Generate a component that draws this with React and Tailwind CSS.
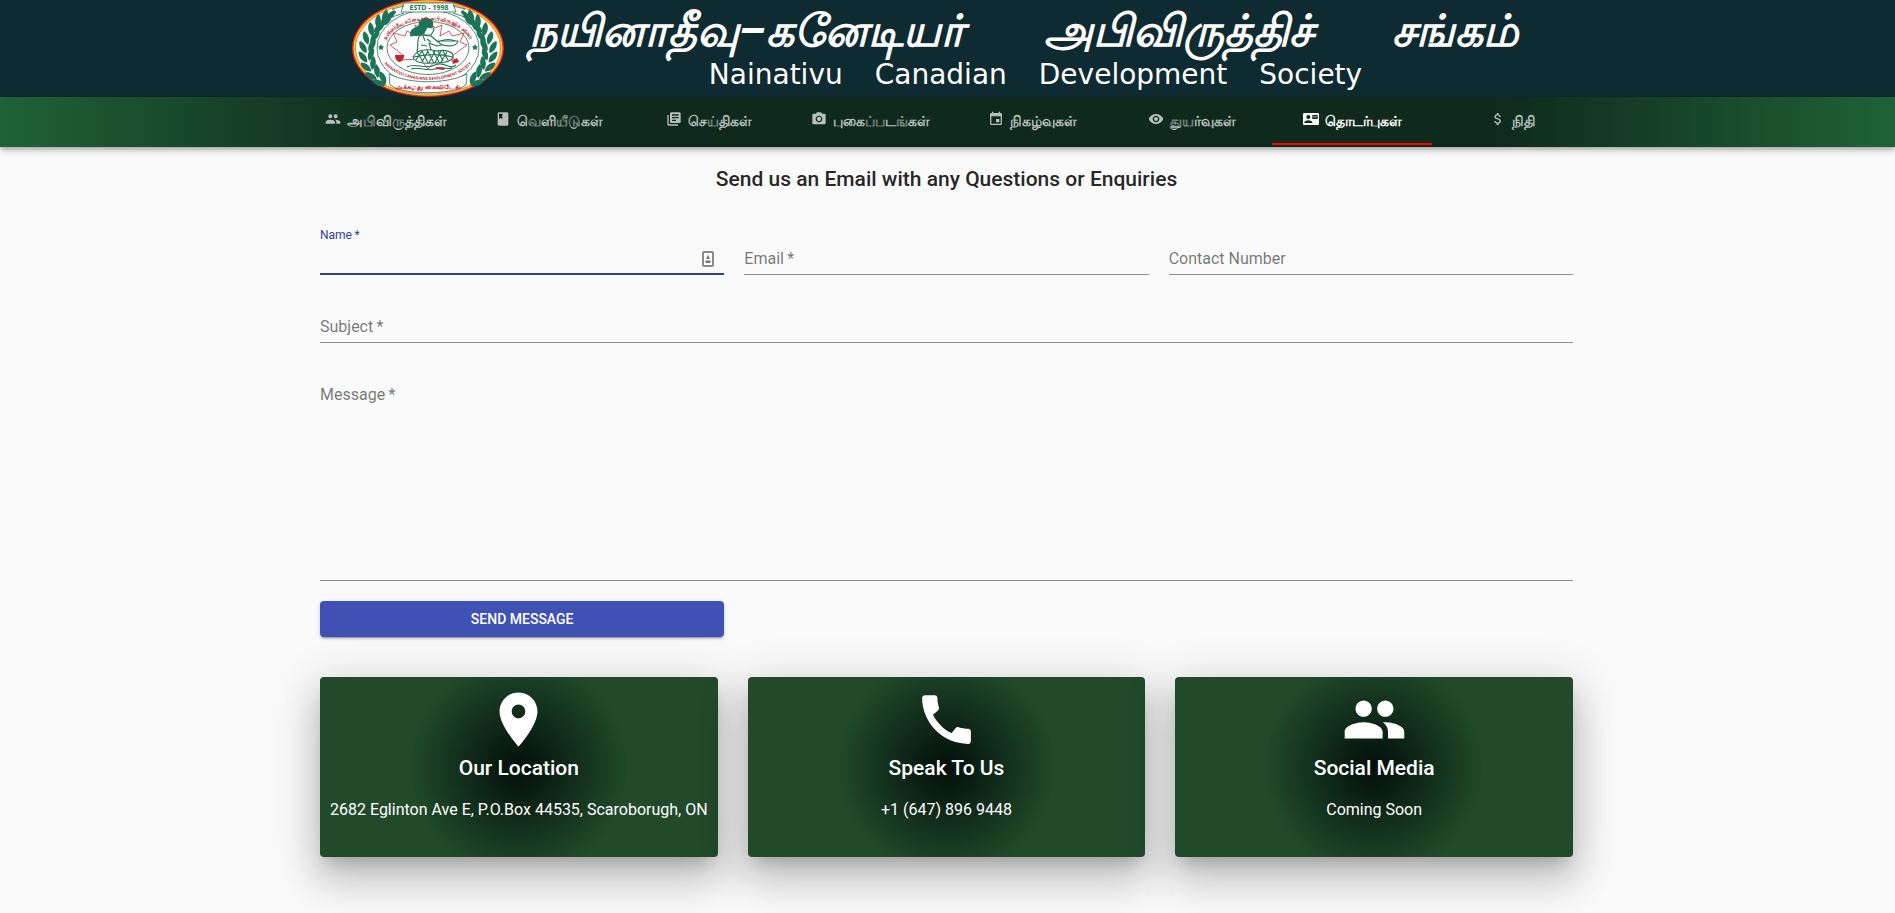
import React from "react";
import {
  MdAttachMoney,
  MdClass,
  MdContactMail,
  MdEvent,
  MdLibraryBooks,
  MdPhotoCamera,
  MdVisibility,
} from "react-icons/md";

const People = ({ className }) => (
  <svg viewBox="0 0 24 24" fill="currentColor" className={className} aria-hidden="true">
    <path d="M16 11c1.66 0 2.99-1.34 2.99-3S17.66 5 16 5c-1.66 0-3 1.34-3 3s1.34 3 3 3zm-8 0c1.66 0 2.99-1.34 2.99-3S9.66 5 8 5C6.34 5 5 6.34 5 8s1.34 3 3 3zm0 2c-2.33 0-7 1.17-7 3.5V19h14v-2.5c0-2.33-4.67-3.5-7-3.5zm8 0c-.29 0-.62.02-.97.05 1.16.84 1.97 1.97 1.97 3.45V19h6v-2.5c0-2.33-4.67-3.5-7-3.5z" />
  </svg>
);

const Pin = ({ className }) => (
  <svg viewBox="0 0 24 24" fill="currentColor" className={className} aria-hidden="true">
    <path d="M12 2C8.13 2 5 5.13 5 9c0 5.25 7 13 7 13s7-7.75 7-13c0-3.87-3.13-7-7-7zm0 9.5c-1.38 0-2.5-1.12-2.5-2.5s1.12-2.5 2.5-2.5 2.5 1.12 2.5 2.5-1.12 2.5-2.5 2.5z" />
  </svg>
);

const Phone = ({ className }) => (
  <svg viewBox="0 0 24 24" fill="currentColor" className={className} aria-hidden="true">
    <path d="M20.01 15.38c-1.23 0-2.42-.2-3.53-.56-.35-.12-.74-.03-1.01.24l-1.57 1.97c-2.83-1.35-5.48-3.9-6.89-6.83l1.95-1.66c.27-.28.35-.67.24-1.02-.37-1.11-.56-2.3-.56-3.53 0-.54-.45-.99-.99-.99H4.19C3.65 3 3 3.24 3 3.99 3 13.28 10.73 21 20.01 21c.71 0 .99-.63.99-1.18v-3.45c0-.54-.45-.99-.99-.99z" />
  </svg>
);

const tabs = [
  { label: "அபிவிருத்திகள்", Icon: People },
  { label: "வெளியீடுகள்", Icon: MdClass },
  { label: "செய்திகள்", Icon: MdLibraryBooks },
  { label: "புகைப்படங்கள்", Icon: MdPhotoCamera },
  { label: "நிகழ்வுகள்", Icon: MdEvent },
  { label: "துயர்வுகள்", Icon: MdVisibility },
  { label: "தொடர்புகள்", Icon: MdContactMail, active: true },
  { label: "நிதி", Icon: MdAttachMoney },
];

const cards = [
  { title: "Our Location", text: "2682 Eglinton Ave E, P.O.Box 44535, Scaroborugh, ON", Icon: Pin },
  { title: "Speak To Us", text: "+1 (647) 896 9448", Icon: Phone },
  { title: "Social Media", text: "Coming Soon", Icon: People },
];

// Leaves of the left laurel: x, y and rotation; the right one is its mirror.
const leaves = [
  [40, 16, 50], [34, 17, 15], [34, 23, 62], [27, 22, 5], [28, 29, 50], [20, 30, -8],
  [24, 37, 40], [15, 39, -18], [21, 46, 30], [12, 48, -30], [20, 55, 18], [12, 58, -38],
  [22, 64, 5], [15, 68, -50], [26, 72, -8], [20, 77, -60], [32, 79, -22], [28, 84, -72],
];

const Laurel = () => (
  <g fill="#1d7358">
    <path d="M42 13C22 22 6 54 34 84" fill="none" stroke="#1d7358" strokeWidth="1" />
    {leaves.map(([x, y, r], i) => (
      <path key={i} d="M0 7C-4.500 2-3-4 0-7C3-4 4.500 2 0 7Z" transform={`translate(${x} ${y}) rotate(${r})`} />
    ))}
  </g>
);

function Crest() {
  return (
    <svg viewBox="0 0 154 100" className="h-[100px] w-[154px] shrink-0" role="img" aria-label="Nainativu Canadian Development Society crest">
      <defs>
        <path id="ring-top" d="M33 50A44 29 0 0 1 121 50" />
        <path id="ring-bottom" d="M28 51A49 30 0 0 0 126 51" />
      </defs>
      <ellipse cx="77" cy="49" rx="76" ry="49" fill="#e3202b" />
      <ellipse cx="77" cy="49" rx="74.500" ry="47.700" fill="#ffd633" />
      <ellipse cx="77" cy="49" rx="73" ry="46.500" fill="#f5821f" />
      <ellipse cx="77" cy="49" rx="72" ry="45.600" fill="#fff" />
      <Laurel />
      <g transform="translate(154 0) scale(-1 1)">
        <Laurel />
      </g>
      <ellipse cx="77" cy="49" rx="51" ry="38" fill="#fff" stroke="#1d7358" strokeWidth="0.800" />
      <ellipse cx="77" cy="49" rx="41" ry="26.500" fill="#fff" stroke="#1d7358" strokeWidth="0.800" />
      <path
        d="M77 20L71 29L64 26L66 37L56 32L54 37L42 34L46 43L39 46L53 57L50 61L69 60L77 70L86 60L104 61L101 57L116 46L109 43L113 34L101 37L98 32L89 37L91 26L84 29Z"
        fill="none"
        stroke="#d6303a"
        strokeWidth="0.800"
      />
      <g stroke="#1d7358" strokeWidth="1.100" strokeLinejoin="round">
        <path d="M69 36C65 42 68 47 66 52C72 55 77 53 80 51L78 44L86 47L95 45L95 43L87 43L80 37Z" fill="#fff" />
        <path d="M72 28L81 26L83 31L80 36L73 36Z" fill="#fff" />
        <path d="M60 37C58 31 64 29 68 27C68 21 73 18 78 20C83 22 82 27 80 29L76 28L73 34C70 38 66 35 60 37Z" fill="#1d7358" />
        <path d="M62 58C66 50 77 50 86 52C95 50 103 53 102 58C100 64 88 64 80 64C72 65 63 63 62 58Z" fill="#fff" />
        <path d="M66 53L72 63M71 52L77 64M76 51L83 64M82 52L88 63M87 52L92 62M92 52L97 61M65 61L71 52M71 63L77 52M78 64L84 52M84 64L90 52M90 63L96 53M63 58C76 55 90 55 102 58" fill="none" />
        <path d="M87 42H107C106 48 91 49 87 42ZM89 42Q97 39 105 42" fill="#fff" />
        <path d="M56 68C64 63 74 71 84 66S98 72 105 66M60 70C70 67 74 73 84 70S96 71 101 69M72 37L74 42M76 40L80 43M70 46L76 47" fill="none" />
      </g>
      <g fill="#1d7358">
        <path d="M30 45l1 2.200 2.300 .2-1.700 1.500 .6 2.300-2.200-1.200-2.200 1.200 .6-2.300-1.700-1.500 2.300-.2ZM124 45l1 2.200 2.300 .2-1.700 1.500 .6 2.300-2.200-1.200-2.200 1.200 .6-2.300-1.700-1.500 2.300-.2Z" />
      </g>
      <path d="M44 56H53C53 61 50 63 48.500 63S44 61 44 56ZM101 62L106 59L108 63L102 65ZM85 68L94 69L93 71L85 70Z" fill="#c22630" />
      <path d="M53 7L41 10L45 13L41 18L53 14M102 7L114 10L110 13L114 18L102 14M53 4H102L105 13H50Z" fill="#fff" stroke="#1d7358" strokeWidth="0.800" />
      <path d="M38 75L48 79C66 84 88 84 106 79L116 75L115 86L108 90C90 95 64 95 46 90L39 86Z" fill="#fff" stroke="#1d7358" strokeWidth="0.800" />
      <g fontFamily="'Open Sans', sans-serif" fontWeight="700" fill="#c22630" textAnchor="middle">
        <text x="78" y="11" fontSize="7" fill="#1d7358">ESTD - 1998</text>
        <text fontSize="5">
          <textPath href="#ring-top" startOffset="50%">நயினாதீவு கனேடியர் அபிவிருத்திச் சங்கம்</textPath>
        </text>
        <text fontSize="4">
          <textPath href="#ring-bottom" startOffset="50%">NAINATIVU CANADIANS DEVELOPMENT SOCIETY</textPath>
        </text>
        <text x="77" y="90" fontSize="7">அக்கமது கைவிடேல்</text>
      </g>
    </svg>
  );
}

function Field({ id, label, type = "text", required, active, multiline, className = "" }) {
  const box =
    "block w-full resize-none bg-transparent px-0 text-base text-black/87 outline-none " +
    (active ? "border-b-2 border-[#303f9f] " : "border-b border-[#8f8f8f] ");
  return (
    <div className={"relative pt-4 " + className}>
      <label
        htmlFor={id}
        className={
          "pointer-events-none absolute left-0 " +
          (active ? "top-0 text-xs leading-4 text-[#303f9f]" : "top-6 text-base leading-4 text-black/54")
        }
      >
        {label}
        {required && "\u2009*"}
      </label>
      {multiline ? (
        <textarea id={id} name={id} className={box + "h-[202px] py-2"} />
      ) : (
        <input id={id} name={id} type={type} className={box + "h-8"} />
      )}
      {active && (
        <svg viewBox="0 0 12 16" className="absolute right-[10px] bottom-2 h-4 w-3" aria-hidden="true">
          <rect x="1" y="1" width="10" height="14" rx="1" fill="#fff" stroke="#8a8a8a" strokeWidth="2" />
          <path d="M6 3.500L8 8H4ZM3.500 9.500h5v2.500h-5z" fill="#777" />
        </svg>
      )}
    </div>
  );
}

export default function App() {
  return (
    <div className="min-h-screen bg-[#fafafa] pr-[2px] font-[Roboto,sans-serif] text-black/87">
      <header className="-mr-[2px]">
        <div className="flex h-[97px] items-center justify-center gap-6 overflow-hidden bg-[#0f2b32] pr-[26px]">
          <Crest />
          <div className="flex w-[990px] flex-col items-center pb-1 text-white">
            <h1 className="flex w-full justify-between text-[44px] leading-[56px] font-bold whitespace-nowrap italic">
              <span>நயினாதீவு–கனேடியர்</span> <span>அபிவிருத்திச்</span> <span>சங்கம்</span>
            </h1>
            <p className="flex gap-8 pl-6 font-['DejaVu_Sans',sans-serif] text-[28px] leading-8 whitespace-nowrap">
              <span>Nainativu</span> <span>Canadian</span> <span>Development</span> <span>Society</span>
            </p>
          </div>
        </div>
        <nav className="relative flex h-[50px] justify-center bg-[linear-gradient(90deg,#1f6237,#0f2a1d_21%,#0f2a1d_79%,#1f6237)] shadow-[0_2px_4px_-1px_rgba(0,0,0,0.2),0_4px_5px_0_rgba(0,0,0,0.14),0_1px_10px_0_rgba(0,0,0,0.12)]">
          {tabs.map(({ label, Icon, active }) => (
            <a
              key={label}
              href="#"
              aria-current={active ? "page" : undefined}
              className={
                "mb-[2px] flex min-w-40 items-center justify-center gap-[6px] border-b-2 px-[22px] pt-[2px] text-sm font-bold whitespace-nowrap " +
                (active ? "border-[#ff0000] text-white" : "border-transparent text-[#b7bfbb]")
              }
            >
              <Icon className="mb-1 size-4" />
              {label}
            </a>
          ))}
        </nav>
      </header>

      <main className="mx-auto max-w-[1253px] pb-13">
        <h2 className="pt-4 text-center text-[21px] leading-8 font-medium">
          Send us an Email with any Questions or Enquiries
        </h2>
        <form className="mt-8 grid grid-cols-3 gap-5" onSubmit={(e) => e.preventDefault()}>
          <Field id="name" label="Name" required active />
          <Field id="email" label="Email" type="email" required />
          <Field id="phone" label="Contact Number" type="tel" />
          <Field id="subject" label="Subject" required className="col-span-3" />
          <Field id="message" label="Message" required multiline className="col-span-3" />
          <button
            type="submit"
            className="h-9 rounded bg-[#3f51b5] text-sm font-medium text-white uppercase shadow-[0_3px_1px_-2px_rgba(0,0,0,0.2),0_2px_2px_0_rgba(0,0,0,0.14),0_1px_5px_0_rgba(0,0,0,0.12)]"
          >
            Send Message
          </button>
        </form>

        <section className="mt-10 grid grid-cols-3 gap-[30px]">
          {cards.map(({ title, text, Icon }) => (
            <article
              key={title}
              className="flex h-[180px] flex-col items-center rounded bg-[radial-gradient(circle,#020f0a,#204a2a_50%)] pt-[10px] text-white shadow-[0_11px_15px_-7px_rgba(0,0,0,0.2),0_24px_38px_3px_rgba(0,0,0,0.14),0_9px_46px_8px_rgba(0,0,0,0.12)]"
            >
              <Icon className="size-[65px]" />
              <h3 className="text-[21px] leading-8 font-medium">{title}</h3>
              <p className="mt-[14px] text-base leading-6 whitespace-nowrap">{text}</p>
            </article>
          ))}
        </section>
      </main>
    </div>
  );
}
